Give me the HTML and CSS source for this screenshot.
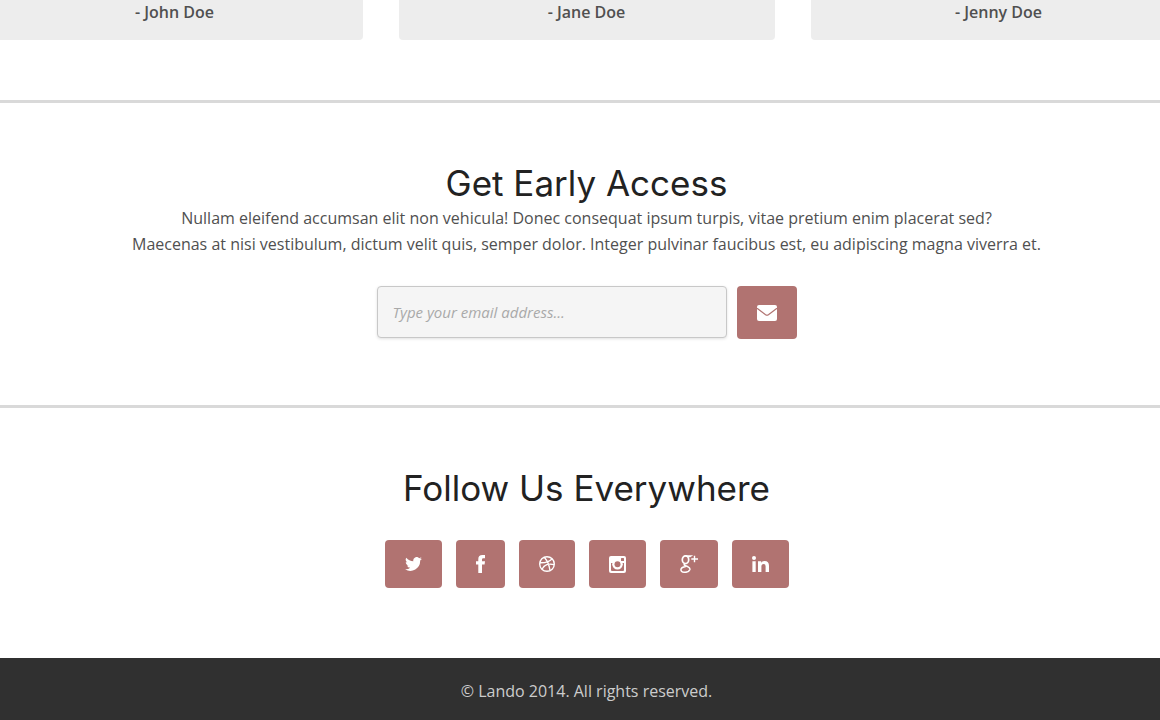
FILE: index.html
```html
<!DOCTYPE html>
<html lang="en">
<head>
<meta charset="utf-8">
<meta name="viewport" content="width=device-width, initial-scale=1">
<title>Lando</title>
<link rel="stylesheet" href="styles.css">
</head>
<body>
<main>
  <section class="testimonials" aria-label="Testimonials">
    <p class="testimonial">- John Doe</p>
    <p class="testimonial">- Jane Doe</p>
    <p class="testimonial">- Jenny Doe</p>
  </section>
  <section class="section">
    <h2 class="heading">Get Early Access</h2>
    <p class="lead">Nullam eleifend accumsan elit non vehicula! Donec consequat ipsum turpis, vitae pretium enim placerat sed?<br>Maecenas at nisi vestibulum, dictum velit quis, semper dolor. Integer pulvinar faucibus est, eu adipiscing magna viverra et.</p>
    <form class="signup">
      <input class="email" type="email" placeholder="Type your email address..." aria-label="Email address">
      <button class="send" type="submit" aria-label="Subscribe">
        <svg width="20" height="16" viewBox="0 0 20 16"><rect width="20" height="16" rx="2" fill="#fff"/><path d="M0 3.200l8.600 6.500q1.400 1 2.800 0L20 3.200" fill="none" stroke="#b17371" stroke-width="1.200"/></svg>
      </button>
    </form>
  </section>
  <section class="section">
    <h2 class="heading">Follow Us Everywhere</h2>
    <nav class="social" aria-label="Social networks">
      <a class="social-link" href="#" aria-label="Twitter"><svg width="17" height="14" viewBox="0 0 24 20" fill="#fff"><path d="M24 2.400a9.800 9.800 0 0 1-2.800.8A4.900 4.900 0 0 0 23.300.5a9.900 9.900 0 0 1-3.100 1.200 4.900 4.900 0 0 0-8.400 4.500A14 14 0 0 1 1.700 1a4.900 4.900 0 0 0 1.500 6.600A4.900 4.900 0 0 1 1 7a4.900 4.900 0 0 0 3.900 4.900 5 5 0 0 1-2.200.1 4.900 4.900 0 0 0 4.600 3.400A9.900 9.900 0 0 1 0 17.500 14 14 0 0 0 21.500 5.100 10 10 0 0 0 24 2.400z"/></svg></a>
      <a class="social-link" href="#" aria-label="Facebook"><svg width="9" height="18" viewBox="0 0 9 18" fill="#fff"><path d="M9 0v3.200H7.200Q6 3.200 6 4.400V6.300h3L8.600 9.500H6V18H2.300V9.500H0V6.300h2.300V4Q2.300 0 6.400 0z"/></svg></a>
      <a class="social-link" href="#" aria-label="Dribbble"><svg width="16" height="16" viewBox="0 0 16 16" fill="none" stroke="#fff" stroke-width="1.400"><circle cx="8" cy="8" r="7.300"/><path d="M5.300 1.300C8.500 5 10.300 9.300 11 14.500M.9 6.800C6 6.900 10.500 6 13 2.900M3 13.200C5.200 9 9.800 7 15.100 8.700"/></svg></a>
      <a class="social-link" href="#" aria-label="Instagram"><svg width="17" height="17" viewBox="0 0 17 17"><rect width="17" height="17" rx="2" fill="#fff"/><path d="M2 7h13v7q0 1-1 1H3q-1 0-1-1z" fill="#b17371"/><circle cx="8.500" cy="8.200" r="5.300" fill="#fff"/><circle cx="8.500" cy="8.200" r="3" fill="#b17371"/><rect x="12" y="2" width="3" height="3" rx=".5" fill="#b17371"/></svg></a>
      <a class="social-link" href="#" aria-label="Google Plus"><svg width="18" height="18" viewBox="0 0 18 18" fill="none" stroke="#fff"><ellipse cx="5.500" cy="4.700" rx="3.200" ry="3.900" stroke-width="1.700"/><path stroke-width="1.200" d="M5.500.8h5.800L10 1.700H7.500"/><path stroke-width="1.500" d="M5 8.500Q3.200 9.700 5 10.500L8 11.800Q10.400 13 9.800 14.800 8.900 17.300 5.200 17.300 1 17.300.9 14.700 1 12.200 5.800 11.500"/><path stroke-width="1.400" d="M14.500.8v6.400M11.300 4H18"/></svg></a>
      <a class="social-link" href="#" aria-label="LinkedIn"><svg width="17" height="16" viewBox="0 0 17 16" fill="#fff"><circle cx="2" cy="2" r="2"/><path d="M.4 5.300h3.300V16H.4zM6 5.300h3.200v1.500Q10.300 5 12.600 5 17 5 17 9.700V16h-3.400v-5.800q0-2.300-1.900-2.300-2.300 0-2.300 2.600V16H6z"/></svg></a>
    </nav>
  </section>
</main>
<footer class="footer">© Lando 2014. All rights reserved.</footer>
</body>
</html>
```
FILE: styles.css
```css
* {
  box-sizing: border-box;
}

body {
  margin: 0;
  background: #fff;
  color: #505050;
  font: 16px/26px "Open Sans", sans-serif;
  overflow-x: hidden;
}

.testimonials {
  display: grid;
  grid-template-columns: repeat(3, 376px);
  justify-content: center;
  gap: 36px;
  padding: 0 0 60px 13px;
}

.testimonial {
  margin: 0;
  padding-bottom: 16px;
  border-radius: 0 0 4px 4px;
  background: #ededed;
  font-weight: 600;
  line-height: 24px;
  text-align: center;
}

.section {
  padding: 60px 0 66px 13px;
  border-top: 3px solid #d9d9d9;
  text-align: center;
}

.section:last-child {
  padding-bottom: 70px;
}

.heading {
  margin: 0 0 2px;
  color: #222;
  font: 400 35px/40px Inter, sans-serif;
}

.lead {
  margin: 0 0 29px;
}

.signup {
  display: flex;
  justify-content: center;
  align-items: flex-start;
  gap: 10px;
}

.email {
  width: 350px;
  height: 52px;
  padding: 0 15px;
  border: 1px solid #c8c8c8;
  border-radius: 4px;
  background: #f5f5f5;
  box-shadow: 0 1px 3px rgba(0, 0, 0, 0.12);
  color: #505050;
  font: 15px "Open Sans", sans-serif;
}

.email::placeholder {
  color: #a9a9a9;
  font-style: italic;
}

.send {
  display: flex;
  align-items: center;
  justify-content: center;
  width: 60px;
  height: 53px;
  padding: 0;
  border: 0;
  border-radius: 4px;
  background: #b17371;
}

.social {
  display: flex;
  justify-content: center;
  gap: 14px;
  margin-top: 32px;
}

.social-link {
  display: flex;
  align-items: center;
  height: 48px;
  padding: 0 20px;
  border-radius: 4px;
  background: #b17371;
}

.footer {
  padding: 20px 0 16px 13px;
  background: #303030;
  color: #ccc;
  text-align: center;
}
```
